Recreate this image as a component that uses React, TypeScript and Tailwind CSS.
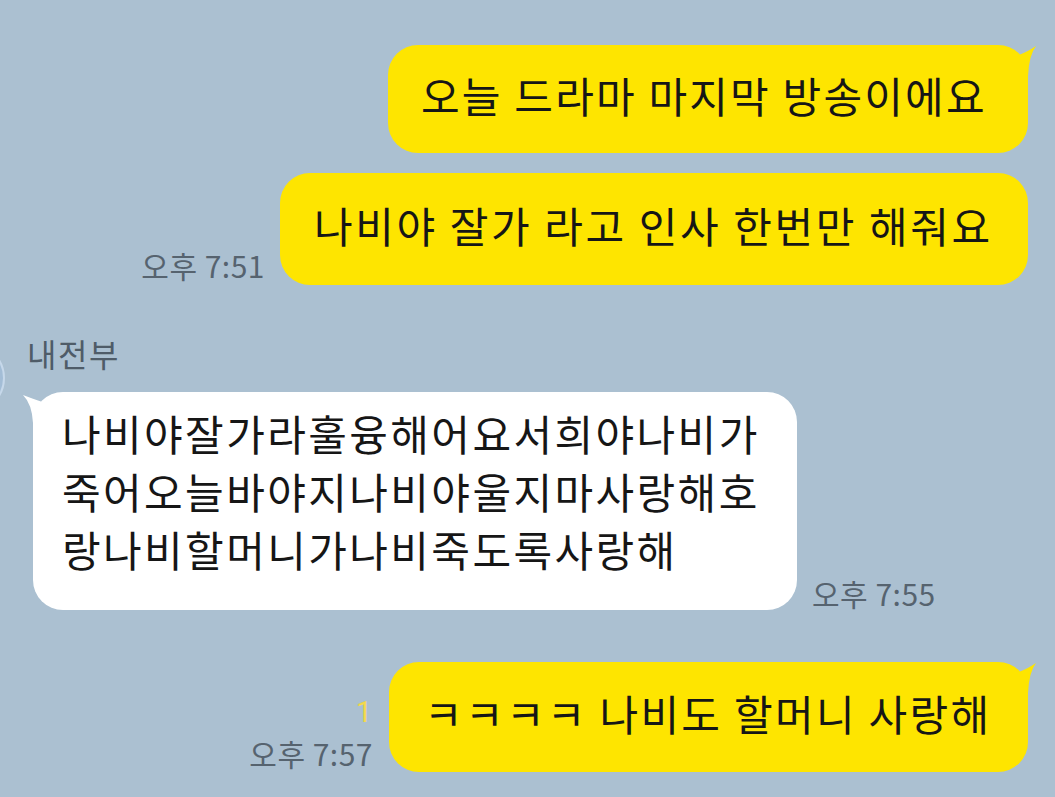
import React from "react";

const FONT = "[font-family:'Noto_Sans_CJK_KR','Noto_Sans',sans-serif]";

function YellowTail() {
  return (
    <svg
      className="absolute right-[-8px] top-0 w-[40px] h-[32px]"
      viewBox="0 0 40 32"
      aria-hidden="true"
    >
      <path d="M24 9.6 Q31 7 40 1 Q33 10 32 31 L24 31 Z" fill="#fee500" />
    </svg>
  );
}

function WhiteTail() {
  return (
    <svg
      className="absolute left-[-10px] top-0 w-[42px] h-[32px]"
      viewBox="0 0 42 32"
      aria-hidden="true"
    >
      <path d="M18 9.6 Q11 7 0 3 Q9 12 10 31 L18 31 Z" fill="#ffffff" />
    </svg>
  );
}

function Time({ children }: { children: React.ReactNode }) {
  return (
    <div className="text-[30px] leading-[34px] text-[#56636f] whitespace-nowrap tracking-[0.5px]">
      {children}
    </div>
  );
}

export default function App() {
  return (
    <div
      className={`${FONT} w-[1055px] h-[797px] bg-[#abc0d1] overflow-hidden flex flex-col text-[#161616]`}
    >
      {/* outgoing messages */}
      <div className="flex flex-col items-end pt-[45px] pr-[27px]">
        <div className="relative w-[640px] h-[108px] bg-[#fee500] rounded-[30px] flex items-center pl-[33px] pb-[8px]">
          <YellowTail />
          <span className="text-[42px] leading-[58px] whitespace-nowrap tracking-[2.2px]">
            오늘 드라마 마지막 방송이에요
          </span>
        </div>
        <div className="flex items-end gap-[15px] mt-[20px]">
          <div className="pb-[3px]">
            <Time>오후 7:51</Time>
          </div>
          <div className="w-[748px] h-[112px] bg-[#fee500] rounded-[30px] flex items-center pl-[34px] pb-[8px]">
            <span className="text-[42px] leading-[58px] whitespace-nowrap tracking-[2.6px]">
              나비야 잘가 라고 인사 한번만 해줘요
            </span>
          </div>
        </div>
      </div>

      {/* incoming message */}
      <div className="flex mt-[50px]">
        <div className="shrink-0 w-[70px] h-[70px] -ml-[65px] mt-[8px] rounded-full bg-[#a3bdd6] border-[2px] border-[#c6d8ea]" />
        <div className="flex flex-col pl-[22px]">
          <div className="text-[32px] leading-[37px] text-[#4f5c68] tracking-[1.5px]">내전부</div>
          <div className="flex items-end mt-[20px]">
            <div className="relative w-[764px] h-[218px] bg-white rounded-[30px] pl-[29px] pt-[12px] ml-[6px]">
              <WhiteTail />
              <div className="text-[42px] leading-[58px] whitespace-nowrap tracking-[2.4px]">
                나비야잘가라훌융해어요서희야나비가
                <br />
                죽어오늘바야지나비야울지마사랑해호
                <br />
                랑나비할머니가나비죽도록사랑해
              </div>
            </div>
            <div className="ml-[15px]">
              <Time>오후 7:55</Time>
            </div>
          </div>
        </div>
      </div>

      {/* last outgoing */}
      <div className="flex justify-end items-end gap-[16px] pr-[27px] mt-[52px]">
        <div className="flex flex-col items-end pb-[2px]">
          <div className="[font-family:'Roboto',sans-serif] text-[29px] leading-[24px] text-[#f3d84a] mb-[12px] pr-[1px]">
            1
          </div>
          <Time>오후 7:57</Time>
        </div>
        <div className="relative w-[639px] h-[110px] bg-[#fee500] rounded-[30px] flex items-center pl-[35px] pb-[8px]">
          <YellowTail />
          <span className="text-[42px] leading-[58px] whitespace-nowrap tracking-[2.3px]">
            ㅋㅋㅋㅋ 나비도 할머니 사랑해
          </span>
        </div>
      </div>
    </div>
  );
}
